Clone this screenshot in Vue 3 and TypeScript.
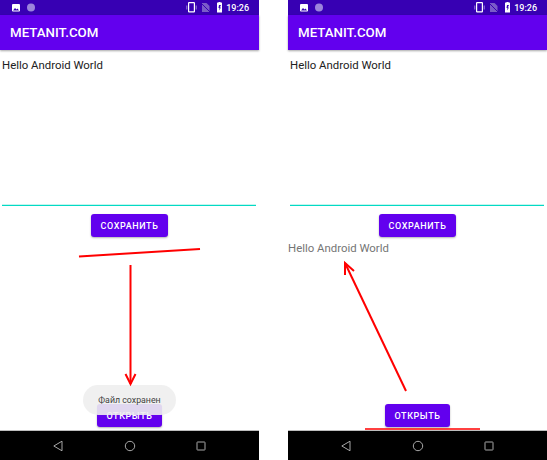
<template>
  <div class="page">
    <div class="phone" v-for="screen in screens" :key="screen.id">
      <div class="status-bar">
        <svg width="40" height="15" viewBox="0 0 40 15">
          <rect x="12" y="4" width="8" height="7.500" rx="1" fill="#fff" />
          <path d="M13 10.500l2-2.500 1.500 1.500 1-1 1.500 2z" fill="#3700b3" />
          <circle cx="31" cy="7.500" r="4" fill="#9b84dc" />
        </svg>
        <div class="status-right">
          <svg width="28" height="15" viewBox="0 0 28 15">
            <rect x="2.600" y="2.600" width="5.800" height="9.300" rx="0.500" fill="none" stroke="#fff" stroke-width="1.200" />
            <path d="M0.800 5.500v4M10.200 5.500v4" stroke="#9b84dc" stroke-width="1" />
            <path d="M16 3h4.500l3 3v6H16z" fill="#7a5cc8" />
            <path d="M14.500 2.500l10 10" stroke="#3700b3" stroke-width="1" />
          </svg>
          <svg width="7" height="15" viewBox="0 0 7 15">
            <path d="M1.500 2.500h1V2h2v.5h1a.5.5 0 0 1 .5.5v9.500H1V3a.5.5 0 0 1 .5-.5z" fill="#fff" />
            <path d="M3 5h2L3.800 7.500H5l-2 3 .5-2.500H2.500z" fill="#3700b3" />
          </svg>
          <span class="clock">19:26</span>
        </div>
      </div>
      <header class="toolbar">METANIT.COM</header>
      <main class="content">
        <div class="edit">Hello Android World</div>
        <div class="save-row">
          <button class="btn">СОХРАНИТЬ</button>
        </div>
        <div class="result">{{ screen.result }}</div>
        <div class="open-row">
          <button class="btn">ОТКРЫТЬ</button>
        </div>
        <div class="toast" v-if="screen.toast">{{ screen.toast }}</div>
      </main>
      <nav class="nav-bar">
        <svg width="12" height="12" viewBox="0 0 12 12">
          <path d="M10 1.200v9.600L1.800 6z" fill="none" stroke="#a8a8a8" stroke-width="1" stroke-linejoin="round" />
        </svg>
        <svg width="12" height="12" viewBox="0 0 12 12">
          <circle cx="6" cy="6" r="4.700" fill="none" stroke="#a8a8a8" stroke-width="1" />
        </svg>
        <svg width="12" height="12" viewBox="0 0 12 12">
          <rect x="2" y="2" width="8" height="8" rx="0.500" fill="none" stroke="#a8a8a8" stroke-width="1" />
        </svg>
      </nav>
    </div>
    <svg class="marks" width="547" height="460" viewBox="0 0 547 460">
      <g fill="none" stroke="#ff0000" stroke-width="2">
        <path d="M79 256.500L200 249" />
        <path d="M130.500 265V384" />
        <path d="M125.500 374l5 10 5-10" />
        <path d="M406 391L345 263" />
        <path d="M345 275V263L354 271" />
        <path d="M365 429H480" stroke-width="1.500" />
      </g>
    </svg>
  </div>
</template>

<script setup lang="ts">
type Screen = {
  id: string;
  result: string;
  toast: string;
};

const screens: Array<Screen> = [
  { id: "saved", result: "", toast: "Файл сохранен" },
  { id: "opened", result: "Hello Android World", toast: "" },
];
</script>

<style>
html,
body {
  margin: 0;
  background: #fff;
}
</style>

<style scoped>
.page {
  position: relative;
  display: flex;
  gap: 29px;
  width: 547px;
  height: 460px;
  overflow: hidden;
  font-family: Roboto, "Liberation Sans", sans-serif;
}
.phone {
  display: flex;
  flex-direction: column;
  width: 259px;
  height: 460px;
  background: #fff;
}
.status-bar {
  display: flex;
  justify-content: space-between;
  align-items: center;
  flex: none;
  height: 15px;
  padding-right: 10px;
  background: #3700b3;
}
.status-right {
  display: flex;
  align-items: center;
  gap: 2px;
}
.clock {
  margin-left: 1px;
  color: #fff;
  font-size: 9px;
  font-weight: 500;
}
.toolbar {
  flex: none;
  height: 35px;
  padding-left: 10px;
  line-height: 36px;
  background: #6200ee;
  color: #fff;
  font-size: 13.300px;
  font-weight: 500;
  box-shadow: 0 1px 2px rgba(0, 0, 0, 0.35);
  z-index: 1;
}
.content {
  position: relative;
  flex: 1;
  display: flex;
  flex-direction: column;
}
.edit {
  flex: none;
  height: 156px;
  margin: 0 3px 0 2px;
  padding: 7px 0 0 0;
  box-sizing: border-box;
  border-bottom: 1px solid #03dac5;
  box-shadow: inset 0 -1px 0 #c4f5ee;
  color: #212121;
  font-size: 11.400px;
  line-height: 16px;
}
.save-row,
.open-row {
  display: flex;
  justify-content: center;
}
.save-row {
  margin-top: 8px;
}
.result {
  height: 17px;
  margin-top: 3px;
  color: #757575;
  font-size: 11.400px;
  line-height: 17px;
}
.open-row {
  margin-top: auto;
  margin-bottom: 3px;
}
.btn {
  height: 23px;
  padding: 0 9.700px;
  border: none;
  border-radius: 3px;
  background: #6200ee;
  color: #fff;
  font-family: inherit;
  font-size: 9px;
  font-weight: 500;
  letter-spacing: 0.6px;
  box-shadow: 0 1px 2px rgba(0, 0, 0, 0.3);
}
.toast {
  position: absolute;
  left: 83px;
  top: 335px;
  width: 93px;
  height: 30px;
  border-radius: 15px;
  background: rgba(238, 238, 238, 0.9);
  color: #424242;
  font-size: 8.800px;
  line-height: 30px;
  text-align: center;
}
.nav-bar {
  display: flex;
  justify-content: center;
  align-items: center;
  gap: 59.500px;
  flex: none;
  height: 30px;
  box-sizing: border-box;
  background: #000;
  border-top: 1px solid #bdbdbd;
}
.marks {
  position: absolute;
  left: 0;
  top: 0;
  pointer-events: none;
}
</style>
